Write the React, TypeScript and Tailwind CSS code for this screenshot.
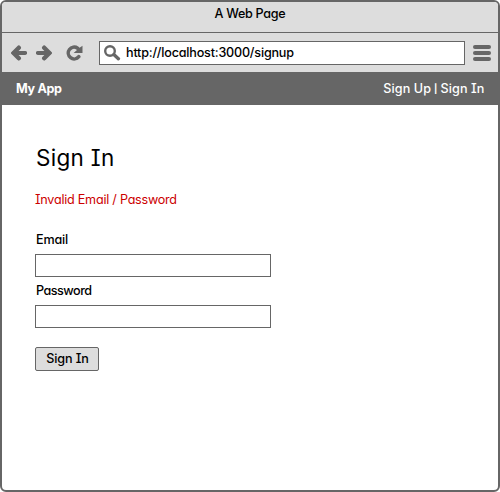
import React from "react";

function BackArrow({ flip = false }: { flip?: boolean }) {
  return (
    <svg width="16" height="16" viewBox="0 0 16 16" className={flip ? "-scale-x-100" : ""} fill="none" stroke="#666666">
      <path d="M3 8H14.2" strokeWidth="3.8" strokeLinecap="round" />
      <path d="M7.8 2.7L2.5 8L7.8 13.3" strokeWidth="4.4" strokeLinecap="round" strokeLinejoin="miter" />
    </svg>
  );
}

function Reload() {
  return (
    <svg width="17" height="16" viewBox="0 0 17 16" fill="none">
      <path d="M11.6 3.2A5.9 5.9 0 1 0 12.8 11.7" stroke="#666666" strokeWidth="3.5" strokeLinecap="round" />
      <path d="M16.5 0.8V8H7.6L11 5L11 2.5L13.6 2.8Z" fill="#666666" />
    </svg>
  );
}

function Magnifier() {
  return (
    <svg width="17" height="16" viewBox="0 0 17 16" fill="none" stroke="#666666">
      <circle cx="6" cy="6" r="4.8" strokeWidth="2.4" />
      <path d="M9.8 9.6L14.4 13.7" strokeWidth="3.4" strokeLinecap="round" />
    </svg>
  );
}

function Field({ label, className, labelClass }: { label: string; className: string; labelClass: string }) {
  return (
    <label className={"flex w-[236px] flex-col " + className}>
      <span className={"h-5 pl-px leading-[22px] " + labelClass}>{label}</span>
      <input type="text" className="mt-[5px] h-[23px] border border-[#666666] bg-white px-1 outline-none" />
    </label>
  );
}

export default function App() {
  return (
    <div className="flex h-[492px] w-[500px] flex-col overflow-hidden rounded-md border-2 border-[#666666] bg-white font-['Inter','Liberation_Sans',sans-serif] text-[12.6px] font-medium whitespace-nowrap text-black [font-feature-settings:'cv11','cv08']">
      <div className="flex h-[31px] shrink-0 justify-center border-b border-[#666666] bg-[#dddddd] pt-px leading-[22px]">
        <span className="tracking-[-0.3px]">A Web Page</span>
      </div>
      <div className="flex h-[39px] shrink-0 items-center bg-[#dddddd] pl-[9px]">
        <div className="flex gap-[9px]">
          <BackArrow />
          <BackArrow flip />
        </div>
        <div className="ml-[14px]">
          <Reload />
        </div>
        <div className="ml-4 flex h-6 w-[366px] items-center border border-[#666666] bg-white pl-1">
          <Magnifier />
          <span className="ml-[5px] pt-px tracking-[-0.2px]">http://localhost:3000/signup</span>
        </div>
        <div className="ml-2 flex flex-col gap-[2px]">
          <i className="h-1 w-[18px] rounded-full bg-[#666666]" />
          <i className="h-1 w-[18px] rounded-full bg-[#666666]" />
          <i className="h-1 w-[18px] rounded-full bg-[#666666]" />
        </div>
      </div>
      <nav className="flex h-[33px] shrink-0 items-center justify-between bg-[#666666] pt-px pr-[13.5px] pl-[14px] text-white">
        <span className="font-bold tracking-[-0.35px]">My App</span>
        <span className="flex items-center gap-[3px] tracking-[0.1px]">
          <span>Sign Up</span>
          <span className="text-[9px] leading-none font-bold tracking-normal">|</span>
          <span>Sign In</span>
        </span>
      </nav>
      <main className="flex flex-col items-start pl-[33px]">
        <h1 className="mt-[37px] h-8 pl-px text-[22.5px] leading-8 font-normal tracking-[0.3px]">Sign In</h1>
        <p className="mt-[15px] h-5 leading-[22px] font-normal tracking-[-0.24px] text-[#cc0000]">Invalid Email / Password</p>
        <Field label="Email" className="mt-5" labelClass="tracking-[-0.2px]" />
        <Field label="Password" className="mt-[3px]" labelClass="tracking-[-0.5px]" />
        <button className="mt-[19px] h-6 w-16 rounded-[2px] border border-[#666666] bg-[#dddddd] pl-px tracking-[-0.1px]">Sign In</button>
      </main>
    </div>
  );
}
